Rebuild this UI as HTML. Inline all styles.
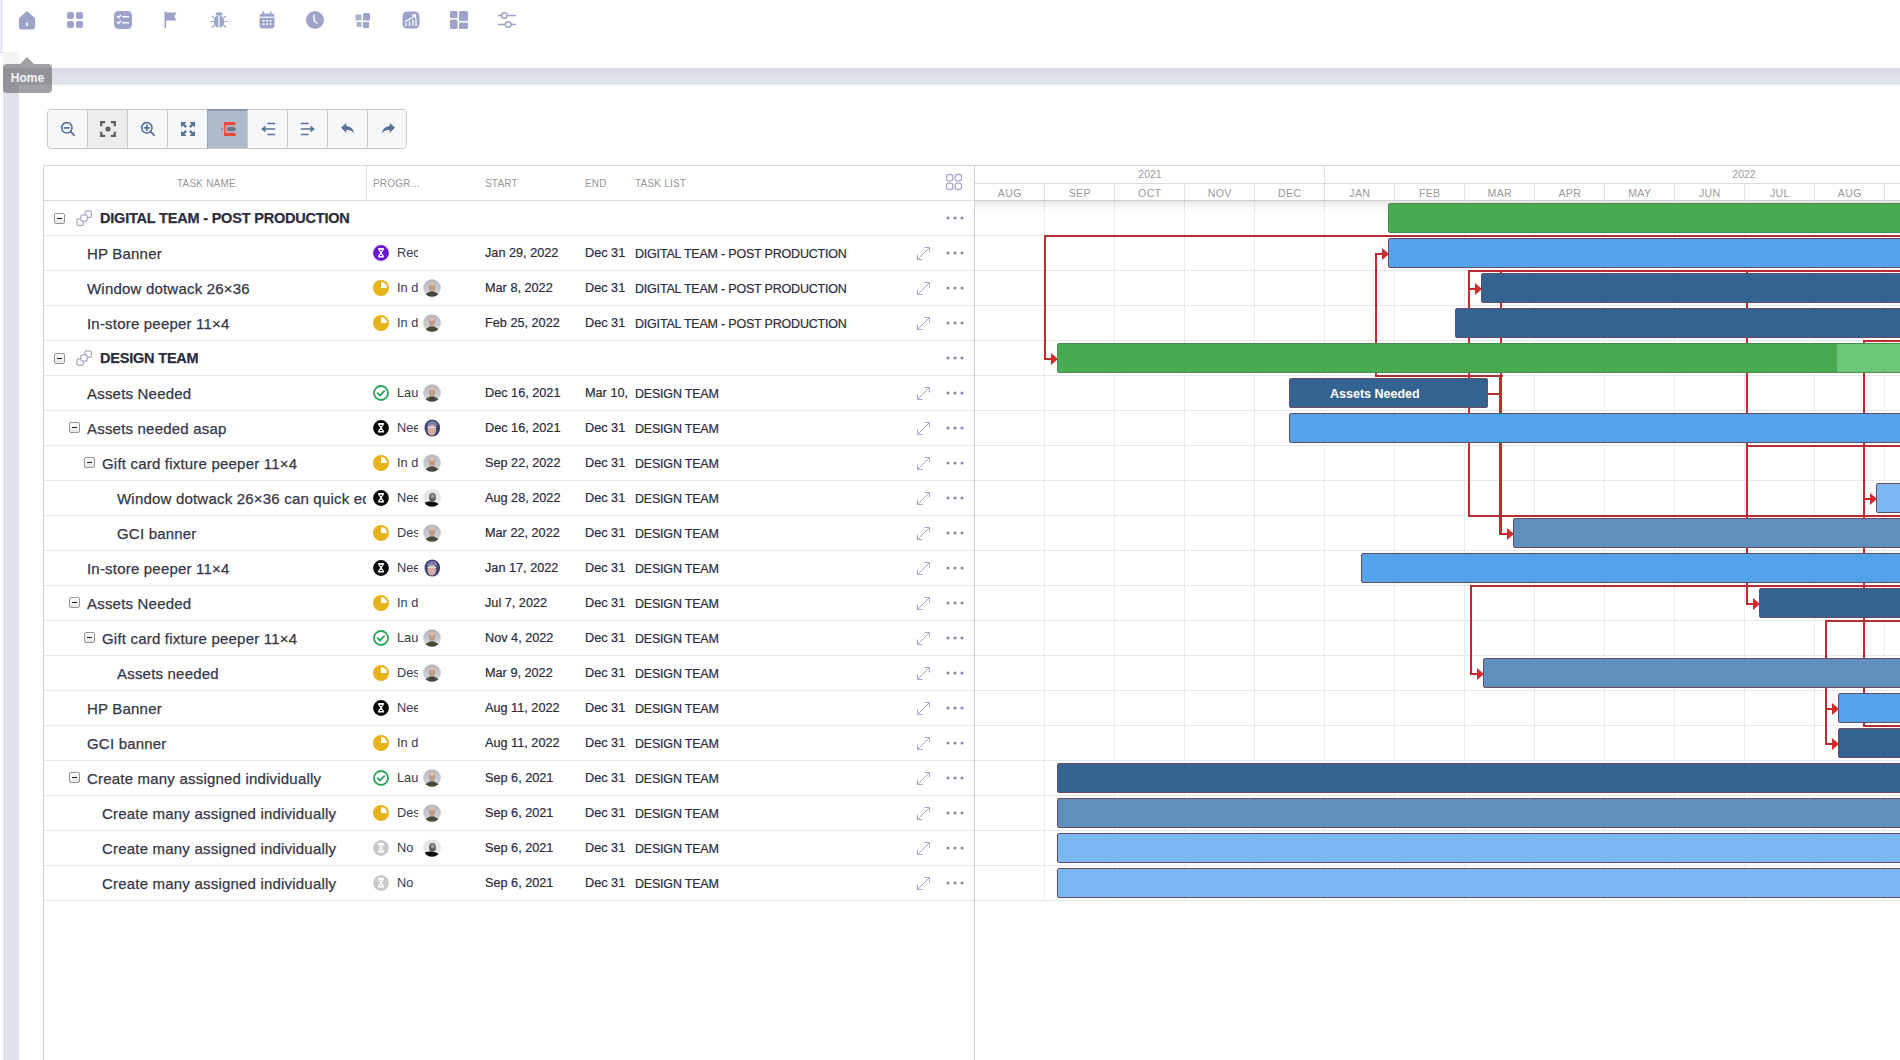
<!DOCTYPE html><html><head><meta charset="utf-8"><style>
*{box-sizing:border-box}
html,body{margin:0;padding:0}
body{width:1900px;height:1060px;overflow:hidden;position:relative;background:#fff;font-family:"Liberation Sans",sans-serif;color:#2b2b3b}
.a{position:absolute}
.ico{position:absolute;top:10px;width:20px;height:20px}
.cb{position:absolute;width:11px;height:11px;border:1px solid #949494;border-radius:2px;background:linear-gradient(#fff,#e6e6e6)}
.cb:after{content:"";position:absolute;left:2px;top:4px;width:5px;height:1.4px;background:#1a1a1a}
.row{position:absolute;left:44px;width:930px;height:35px;border-bottom:1px solid #e9e9ee}
.nm{position:absolute;top:0;line-height:35px;font-size:15px;letter-spacing:.2px;-webkit-text-stroke:.25px #383848;white-space:nowrap;overflow:hidden;color:#363646}
.grp{font-weight:bold;font-size:14.5px;letter-spacing:-.2px;top:0;color:#2b2b3b}
.st{position:absolute;left:329px;top:9px;width:16px;height:16px}
.stx{position:absolute;left:353px;width:21px;top:-1px;line-height:35px;font-size:12.8px;overflow:hidden;white-space:nowrap;color:#3a3a4a}
.av{position:absolute;left:379px;top:8px;width:18px;height:18px}
.dt{position:absolute;top:0;line-height:35px;font-size:12.7px;-webkit-text-stroke:.2px #2b2b3b;white-space:nowrap;color:#2b2b3b}
.tl{position:absolute;left:591px;top:0;line-height:36px;font-size:12.5px;letter-spacing:-.2px;-webkit-text-stroke:.2px #2b2b3b;white-space:nowrap;color:#2b2b3b}
.ex{position:absolute;left:872px;top:10px;width:15px;height:15px}
.dots{position:absolute;left:902px;top:15px;width:18px;height:4px}
.hd{position:absolute;font-size:10px;color:#969696;top:0;line-height:36px;letter-spacing:.2px}
.bar{position:absolute;height:30px;border:1px solid #6d4a63;border-radius:2px}
.ml{position:absolute;width:70px;top:184px;height:17px;line-height:18px;padding-left:1.5px;text-align:center;font-size:10.6px;letter-spacing:.3px;color:#9a9a9a}
</style></head><body>
<svg width="0" height="0" style="position:absolute"><defs><clipPath id="acl"><circle cx="9" cy="9" r="8.8"/></clipPath><linearGradient id="mbg" x1="0" y1="0" x2="0" y2="1"><stop offset="0" stop-color="#b3b7be"/><stop offset="1" stop-color="#d6d8dc"/></linearGradient></defs></svg>

<div class="a" style="left:0;top:0;width:3px;height:52px;background:#e8ebf7"></div>
<div class="a" style="left:0;top:52px;width:3px;height:1px;background:#dcdde3"></div>
<div class="a" style="left:3px;top:52px;width:16px;height:16px;background:#f3f4f5"></div>
<div class="a" style="left:3px;top:68px;width:16px;height:992px;background:#dfe2e8"></div>
<div class="a" style="left:3px;top:68px;width:1897px;height:17px;background:linear-gradient(#dadce3,#e3e5ec)"></div>
<div class="a" style="left:19px;top:85px;width:1881px;height:975px;background:#fff"></div>
<svg class="ico" style="left:17px" viewBox="0 0 20 20"><path d="M3 8.6L10 2.6l7 6v7.9a2 2 0 0 1-2 2H5a2 2 0 0 1-2-2z" fill="#9ea4c9" stroke="#9ea4c9" stroke-width="2.2" stroke-linejoin="round"/><rect x="9.15" y="12.6" width="1.7" height="3.4" fill="#fff"/></svg>
<svg class="ico" style="left:65px" viewBox="0 0 20 20"><rect x="2" y="2" width="7" height="7" rx="2" fill="#9ea4c9"/><rect x="11" y="2" width="7" height="7" rx="2" fill="#9ea4c9"/><rect x="2" y="11" width="7" height="7" rx="2" fill="#9ea4c9"/><rect x="11" y="11" width="7" height="7" rx="2" fill="#9ea4c9"/></svg>
<svg class="ico" style="left:113px" viewBox="0 0 20 20"><rect x="1" y="1" width="18" height="18" rx="4.5" fill="#9ea4c9"/><path d="M4.3 6.5l1.2 1.2 2-2.2M4.3 12.3l1.2 1.2 2-2.2M9.8 6.8h5.6M9.8 12.8h5.6" stroke="#fff" stroke-width="1.4" fill="none" stroke-linecap="round"/></svg>
<svg class="ico" style="left:161px" viewBox="0 0 20 20"><rect x="3.5" y="1.5" width="1.6" height="17" rx=".8" fill="#9ea4c9"/><path d="M5 2.5h10.5l-2.2 4 2.2 4H5z" fill="#9ea4c9"/></svg>
<svg class="ico" style="left:209px" viewBox="0 0 20 20"><path d="M6.5 5.2a3.5 3 0 0 1 7 0z" fill="#9ea4c9"/><ellipse cx="10" cy="11.5" rx="5.2" ry="6.2" fill="#9ea4c9"/><rect x="9.4" y="6" width="1.2" height="11.5" fill="#fff"/><path d="M1.5 11.5h3M15.5 11.5h3M3 6l2.5 2M17 6l-2.5 2M3 17.5l2.5-2.5M17 17.5l-2.5-2.5M7.5 2.5l1 1.5M12.5 2.5l-1 1.5" stroke="#9ea4c9" stroke-width="1.2"/></svg>
<svg class="ico" style="left:257px" viewBox="0 0 20 20"><rect x="2.5" y="3.5" width="15" height="15" rx="3" fill="#9ea4c9"/><rect x="5.5" y="1" width="1.4" height="4" rx=".7" fill="#9ea4c9"/><rect x="13.1" y="1" width="1.4" height="4" rx=".7" fill="#9ea4c9"/><path d="M2.5 7.2h15" stroke="#fff" stroke-width="1.1"/><g fill="#fff"><rect x="5.5" y="10" width="2" height="1.6"/><rect x="9" y="10" width="2" height="1.6"/><rect x="12.5" y="10" width="2" height="1.6"/><rect x="5.5" y="13.3" width="2" height="1.6"/><rect x="9" y="13.3" width="2" height="1.6"/><rect x="12.5" y="13.3" width="2" height="1.6"/></g></svg>
<svg class="ico" style="left:305px" viewBox="0 0 20 20"><circle cx="10" cy="10" r="9" fill="#9ea4c9"/><path d="M9 5v5.5l3 2.5" stroke="#fff" stroke-width="1.4" fill="none" stroke-linecap="round"/></svg>
<svg class="ico" style="left:353px" viewBox="0 0 20 20"><rect x="2.5" y="4.5" width="6" height="6" rx="1" fill="#9ea4c9" opacity=".85"/><rect x="10" y="3" width="7" height="7.5" rx="1.2" fill="#9ea4c9"/><rect x="3.5" y="12" width="5" height="5" rx="1" fill="#9ea4c9" opacity=".85"/><rect x="10" y="12" width="6" height="6" rx="1" fill="#9ea4c9"/></svg>
<svg class="ico" style="left:401px" viewBox="0 0 20 20"><rect x="1.5" y="1.5" width="17" height="17" rx="4.5" fill="#9ea4c9"/><path d="M4.5 11.5l9.5-5.5M11.5 5h3v3M5 15.5v-2M8.5 15.5v-3.5M12 15.5v-5M15 15.5v-6" stroke="#fff" stroke-width="1.3" fill="none" stroke-linecap="round"/></svg>
<svg class="ico" style="left:449px" viewBox="0 0 20 20"><rect x="1" y="1" width="7.5" height="7" rx="1.5" fill="#9ea4c9"/><rect x="10" y="1" width="9" height="10" rx="1.5" fill="#9ea4c9"/><rect x="1" y="9.5" width="7.5" height="9.5" rx="1.5" fill="#9ea4c9"/><rect x="10" y="12.5" width="9" height="6.5" rx="1.5" fill="#9ea4c9"/></svg>
<svg class="ico" style="left:497px" viewBox="0 0 20 20"><path d="M1 5.5h3.5M10 5.5h9M1 14.5h7.5M14 14.5h5" stroke="#9ea4c9" stroke-width="1.5"/><circle cx="7.3" cy="5.5" r="2.8" fill="none" stroke="#9ea4c9" stroke-width="1.5"/><circle cx="11.3" cy="14.5" r="2.8" fill="none" stroke="#9ea4c9" stroke-width="1.5"/></svg>
<div class="a" style="left:3px;top:64px;width:49px;height:29px;background:rgba(82,84,90,.55);border-radius:4px;color:#f4f4f4;font-weight:bold;font-size:12px;line-height:29px;text-align:center">Home</div>
<div class="a" style="left:20px;top:57px;width:0;height:0;border-left:7px solid transparent;border-right:7px solid transparent;border-bottom:7px solid rgba(82,84,90,.55)"></div>
<div class="a" style="left:47px;top:109px;width:360px;height:40px;border:1px solid #c9cacd;border-radius:4px;background:#f6f7f9;overflow:hidden">
<div class="a" style="left:0px;top:0;width:40px;height:38px;background:#f6f7f9;;display:flex;align-items:center;justify-content:center"><svg width="16" height="16" viewBox="0 0 16 16"><circle cx="6.8" cy="6.8" r="5.2" fill="none" stroke="#5a7295" stroke-width="1.6"/><path d="M4.4 6.8h4.8M10.6 10.6l3.5 3.5" stroke="#5a7295" stroke-width="1.8" stroke-linecap="round"/></svg></div>
<div class="a" style="left:39px;top:0;width:40px;height:38px;background:#ececec;border-left:1px solid #c9cacd;;display:flex;align-items:center;justify-content:center"><svg width="16" height="16" viewBox="0 0 16 16"><path d="M1.2 5.2V1.2H5.2M10.8 1.2h4v4M14.8 10.8v4h-4M5.2 14.8h-4v-4" fill="none" stroke="#5c5f66" stroke-width="2.2"/><circle cx="8" cy="8" r="2.6" fill="#5c5f66"/></svg></div>
<div class="a" style="left:79px;top:0;width:40px;height:38px;background:#f6f7f9;border-left:1px solid #c9cacd;;display:flex;align-items:center;justify-content:center"><svg width="16" height="16" viewBox="0 0 16 16"><circle cx="6.8" cy="6.8" r="5.2" fill="none" stroke="#5a7295" stroke-width="1.6"/><path d="M4.4 6.8h4.8M6.8 4.4v4.8M10.6 10.6l3.5 3.5" stroke="#5a7295" stroke-width="1.8" stroke-linecap="round"/></svg></div>
<div class="a" style="left:119px;top:0;width:40px;height:38px;background:#f6f7f9;border-left:1px solid #c9cacd;;display:flex;align-items:center;justify-content:center"><svg width="16" height="16" viewBox="0 0 16 16"><g fill="#5a7295"><path d="M1 1h5.5L4.6 2.9 7 5.3 5.3 7 2.9 4.6 1 6.5z"/><path d="M15 1v5.5l-1.9-1.9L10.7 7 9 5.3l2.4-2.4L9.5 1z"/><path d="M1 15V9.5l1.9 1.9L5.3 9 7 10.7l-2.4 2.4L6.5 15z"/><path d="M15 15H9.5l1.9-1.9L9 10.7 10.7 9l2.4 2.4L15 9.5z"/></g></svg></div>
<div class="a" style="left:159px;top:0;width:40px;height:38px;background:#afb9cc;border-left:1px solid #c9cacd;box-shadow:inset 0 1px 0 #8d97a8;border-left-color:#9ca3ae;;display:flex;align-items:center;justify-content:center"><svg width="20" height="16" viewBox="0 0 20 16"><path d="M7.5 2.6H16.2M7.5 13.4H16.2" stroke="#e9493d" stroke-width="3.2" stroke-linecap="round"/><rect x="6" y="1" width="2.3" height="14" rx=".6" fill="#e9493d"/><rect x="7.3" y="4.3" width="1" height="7.4" fill="#f39a94"/><rect x="8.9" y="6.1" width="8.8" height="3.8" rx="1.7" fill="#6e7683"/><rect x="3.4" y="7" width="1.6" height="2" rx=".5" fill="#7d8592"/></svg></div>
<div class="a" style="left:199px;top:0;width:40px;height:38px;background:#f6f7f9;border-left:1px solid #c9cacd;;display:flex;align-items:center;justify-content:center"><svg width="16" height="16" viewBox="0 0 16 16"><path d="M8 2.5h6.5M8 13.5h6.5M4 8h10.5" stroke="#5a7295" stroke-width="1.7" stroke-linecap="round"/><path d="M1.2 8L5.5 4.6v6.8z" fill="#5a7295"/></svg></div>
<div class="a" style="left:239px;top:0;width:40px;height:38px;background:#f6f7f9;border-left:1px solid #c9cacd;;display:flex;align-items:center;justify-content:center"><svg width="16" height="16" viewBox="0 0 16 16"><path d="M1.5 2.5h6.5M1.5 13.5h6.5M1.5 8h10.5" stroke="#5a7295" stroke-width="1.7" stroke-linecap="round"/><path d="M14.8 8L10.5 4.6v6.8z" fill="#5a7295"/></svg></div>
<div class="a" style="left:279px;top:0;width:40px;height:38px;background:#f6f7f9;border-left:1px solid #c9cacd;;display:flex;align-items:center;justify-content:center"><svg width="16" height="16" viewBox="0 0 16 16"><path d="M1 6.5L6.3 2v3c4.5 .3 7.2 3 7.7 7.5-1.5-2.5-4-3.6-7.7-3.5v3z" fill="#5a7295"/></svg></div>
<div class="a" style="left:319px;top:0;width:40px;height:38px;background:#f6f7f9;border-left:1px solid #c9cacd;;display:flex;align-items:center;justify-content:center"><svg width="16" height="16" viewBox="0 0 16 16"><path d="M15 6.5L9.7 2v3C5.2 5.3 2.5 8 2 12.5c1.5-2.5 4-3.6 7.7-3.5v3z" fill="#5a7295"/></svg></div>
</div>
<div class="a" style="left:207px;top:109px;width:41px;height:1px;background:#8d96a6"></div>
<div class="a" style="left:43px;top:165px;width:1857px;height:1px;background:#d9d9e0"></div>
<div class="a" style="left:43px;top:165px;width:1px;height:895px;background:#d4d4dc"></div>
<div class="a" style="left:974px;top:165px;width:1px;height:895px;background:#cfcfd1"></div>
<div class="a" style="left:44px;top:200px;width:930px;height:1px;background:#d9d9de"></div>
<div class="a" style="left:366px;top:166px;width:1px;height:34px;background:#dcdce2"></div>
<div class="hd" style="left:177px;top:166px">TASK NAME</div>
<div class="hd" style="left:373px;top:166px">PROGR...</div>
<div class="hd" style="left:485px;top:166px">START</div>
<div class="hd" style="left:585px;top:166px">END</div>
<div class="hd" style="left:635px;top:166px">TASK LIST</div>
<svg class="a" style="left:945px;top:173px" width="18" height="18" viewBox="0 0 18 18"><g fill="none" stroke="#aaa8cc" stroke-width="1.3"><rect x="1.5" y="1.5" width="6.3" height="6.3" rx="2"/><rect x="10.2" y="1.5" width="6.3" height="6.3" rx="2"/><rect x="1.5" y="10.2" width="6.3" height="6.3" rx="2"/><rect x="10.2" y="10.2" width="6.3" height="6.3" rx="2"/></g></svg>
<div class="a" style="left:975px;top:183px;width:925px;height:1px;background:#dcdcdf"></div>
<div class="a" style="left:975px;top:200px;width:925px;height:1px;background:#d0d0d2"></div>
<div class="a" style="left:1324px;top:166px;width:1px;height:17px;background:#e3e3e6"></div>
<div class="a" style="left:976px;top:166px;width:348px;height:17px;line-height:17px;text-align:center;font-size:10.5px;color:#9a9a9a">2021</div>
<div class="a" style="left:1325px;top:166px;width:838px;height:17px;line-height:17px;text-align:center;font-size:10.5px;color:#9a9a9a">2022</div>
<div class="ml" style="left:974px">AUG</div>
<div class="ml" style="left:1044px">SEP</div>
<div class="a" style="left:1044px;top:184px;width:1px;height:16px;background:#e3e3e6"></div>
<div class="ml" style="left:1114px">OCT</div>
<div class="a" style="left:1114px;top:184px;width:1px;height:16px;background:#e3e3e6"></div>
<div class="ml" style="left:1184px">NOV</div>
<div class="a" style="left:1184px;top:184px;width:1px;height:16px;background:#e3e3e6"></div>
<div class="ml" style="left:1254px">DEC</div>
<div class="a" style="left:1254px;top:184px;width:1px;height:16px;background:#e3e3e6"></div>
<div class="ml" style="left:1324px">JAN</div>
<div class="a" style="left:1324px;top:184px;width:1px;height:16px;background:#e3e3e6"></div>
<div class="ml" style="left:1394px">FEB</div>
<div class="a" style="left:1394px;top:184px;width:1px;height:16px;background:#e3e3e6"></div>
<div class="ml" style="left:1464px">MAR</div>
<div class="a" style="left:1464px;top:184px;width:1px;height:16px;background:#e3e3e6"></div>
<div class="ml" style="left:1534px">APR</div>
<div class="a" style="left:1534px;top:184px;width:1px;height:16px;background:#e3e3e6"></div>
<div class="ml" style="left:1604px">MAY</div>
<div class="a" style="left:1604px;top:184px;width:1px;height:16px;background:#e3e3e6"></div>
<div class="ml" style="left:1674px">JUN</div>
<div class="a" style="left:1674px;top:184px;width:1px;height:16px;background:#e3e3e6"></div>
<div class="ml" style="left:1744px">JUL</div>
<div class="a" style="left:1744px;top:184px;width:1px;height:16px;background:#e3e3e6"></div>
<div class="ml" style="left:1814px">AUG</div>
<div class="a" style="left:1814px;top:184px;width:1px;height:16px;background:#e3e3e6"></div>
<div class="ml" style="left:1884px">SEP</div>
<div class="a" style="left:1884px;top:184px;width:1px;height:16px;background:#e3e3e6"></div>
<div class="a" style="left:1044px;top:201px;width:1px;height:699px;background:#ececef"></div>
<div class="a" style="left:1114px;top:201px;width:1px;height:699px;background:#ececef"></div>
<div class="a" style="left:1184px;top:201px;width:1px;height:699px;background:#ececef"></div>
<div class="a" style="left:1254px;top:201px;width:1px;height:699px;background:#ececef"></div>
<div class="a" style="left:1324px;top:201px;width:1px;height:699px;background:#ececef"></div>
<div class="a" style="left:1394px;top:201px;width:1px;height:699px;background:#ececef"></div>
<div class="a" style="left:1464px;top:201px;width:1px;height:699px;background:#ececef"></div>
<div class="a" style="left:1534px;top:201px;width:1px;height:699px;background:#ececef"></div>
<div class="a" style="left:1604px;top:201px;width:1px;height:699px;background:#ececef"></div>
<div class="a" style="left:1674px;top:201px;width:1px;height:699px;background:#ececef"></div>
<div class="a" style="left:1744px;top:201px;width:1px;height:699px;background:#ececef"></div>
<div class="a" style="left:1814px;top:201px;width:1px;height:699px;background:#ececef"></div>
<div class="a" style="left:1884px;top:201px;width:1px;height:699px;background:#ececef"></div>
<div class="a" style="left:975px;top:235px;width:925px;height:1px;background:#e9e9ec"></div>
<div class="a" style="left:975px;top:270px;width:925px;height:1px;background:#e9e9ec"></div>
<div class="a" style="left:975px;top:305px;width:925px;height:1px;background:#e9e9ec"></div>
<div class="a" style="left:975px;top:340px;width:925px;height:1px;background:#e9e9ec"></div>
<div class="a" style="left:975px;top:375px;width:925px;height:1px;background:#e9e9ec"></div>
<div class="a" style="left:975px;top:410px;width:925px;height:1px;background:#e9e9ec"></div>
<div class="a" style="left:975px;top:445px;width:925px;height:1px;background:#e9e9ec"></div>
<div class="a" style="left:975px;top:480px;width:925px;height:1px;background:#e9e9ec"></div>
<div class="a" style="left:975px;top:515px;width:925px;height:1px;background:#e9e9ec"></div>
<div class="a" style="left:975px;top:550px;width:925px;height:1px;background:#e9e9ec"></div>
<div class="a" style="left:975px;top:585px;width:925px;height:1px;background:#e9e9ec"></div>
<div class="a" style="left:975px;top:620px;width:925px;height:1px;background:#e9e9ec"></div>
<div class="a" style="left:975px;top:655px;width:925px;height:1px;background:#e9e9ec"></div>
<div class="a" style="left:975px;top:690px;width:925px;height:1px;background:#e9e9ec"></div>
<div class="a" style="left:975px;top:725px;width:925px;height:1px;background:#e9e9ec"></div>
<div class="a" style="left:975px;top:760px;width:925px;height:1px;background:#e9e9ec"></div>
<div class="a" style="left:975px;top:795px;width:925px;height:1px;background:#e9e9ec"></div>
<div class="a" style="left:975px;top:830px;width:925px;height:1px;background:#e9e9ec"></div>
<div class="a" style="left:975px;top:865px;width:925px;height:1px;background:#e9e9ec"></div>
<div class="a" style="left:975px;top:900px;width:925px;height:1px;background:#e9e9ec"></div>
<div class="a" style="left:975px;top:201px;width:925px;height:12px;background:linear-gradient(rgba(0,0,0,.1),rgba(0,0,0,.03) 50%,rgba(0,0,0,0))"></div>
<div class="a" style="left:1045px;top:235px;width:856px;height:2px;background:#b52e31"></div>
<div class="a" style="left:1044px;top:235px;width:2px;height:125px;background:#c4292d"></div>
<div class="a" style="left:1375px;top:253px;width:2px;height:124px;background:#c4292d"></div>
<div class="a" style="left:1376px;top:375px;width:127px;height:2px;background:#b52e31"></div>
<div class="a" style="left:1469px;top:270px;width:432px;height:2px;background:#b52e31"></div>
<div class="a" style="left:1468px;top:270px;width:2px;height:247px;background:#c4292d"></div>
<div class="a" style="left:1469px;top:515px;width:432px;height:2px;background:#b52e31"></div>
<div class="a" style="left:1500px;top:270px;width:2px;height:265px;background:#c4292d"></div>
<div class="a" style="left:1499px;top:375px;width:2px;height:160px;background:#c4292d"></div>
<div class="a" style="left:1488px;top:393px;width:14px;height:2px;background:#b52e31"></div>
<div class="a" style="left:1746px;top:270px;width:2px;height:335px;background:#c4292d"></div>
<div class="a" style="left:1747px;top:445px;width:154px;height:2px;background:#b52e31"></div>
<div class="a" style="left:1864px;top:340px;width:37px;height:2px;background:#b52e31"></div>
<div class="a" style="left:1863px;top:340px;width:2px;height:387px;background:#c4292d"></div>
<div class="a" style="left:1864px;top:725px;width:37px;height:2px;background:#b52e31"></div>
<div class="a" style="left:1471px;top:585px;width:430px;height:2px;background:#b52e31"></div>
<div class="a" style="left:1470px;top:585px;width:2px;height:90px;background:#c4292d"></div>
<div class="a" style="left:1826px;top:620px;width:75px;height:2px;background:#b52e31"></div>
<div class="a" style="left:1825px;top:620px;width:2px;height:125px;background:#c4292d"></div>
<div class="a" style="left:1044px;top:358px;width:8px;height:2px;background:#c4292d"></div>
<div class="a" style="left:1051px;top:353px;width:0;height:0;border-top:6px solid transparent;border-bottom:6px solid transparent;border-left:7px solid #d52a2c"></div>
<div class="a" style="left:1375px;top:253px;width:8px;height:2px;background:#c4292d"></div>
<div class="a" style="left:1382px;top:248px;width:0;height:0;border-top:6px solid transparent;border-bottom:6px solid transparent;border-left:7px solid #d52a2c"></div>
<div class="a" style="left:1468px;top:288px;width:8px;height:2px;background:#c4292d"></div>
<div class="a" style="left:1475px;top:283px;width:0;height:0;border-top:6px solid transparent;border-bottom:6px solid transparent;border-left:7px solid #d52a2c"></div>
<div class="a" style="left:1500px;top:533px;width:8px;height:2px;background:#c4292d"></div>
<div class="a" style="left:1507px;top:528px;width:0;height:0;border-top:6px solid transparent;border-bottom:6px solid transparent;border-left:7px solid #d52a2c"></div>
<div class="a" style="left:1746px;top:603px;width:8px;height:2px;background:#c4292d"></div>
<div class="a" style="left:1753px;top:598px;width:0;height:0;border-top:6px solid transparent;border-bottom:6px solid transparent;border-left:7px solid #d52a2c"></div>
<div class="a" style="left:1863px;top:498px;width:8px;height:2px;background:#c4292d"></div>
<div class="a" style="left:1870px;top:493px;width:0;height:0;border-top:6px solid transparent;border-bottom:6px solid transparent;border-left:7px solid #d52a2c"></div>
<div class="a" style="left:1470px;top:673px;width:8px;height:2px;background:#c4292d"></div>
<div class="a" style="left:1477px;top:668px;width:0;height:0;border-top:6px solid transparent;border-bottom:6px solid transparent;border-left:7px solid #d52a2c"></div>
<div class="a" style="left:1825px;top:708px;width:8px;height:2px;background:#c4292d"></div>
<div class="a" style="left:1832px;top:703px;width:0;height:0;border-top:6px solid transparent;border-bottom:6px solid transparent;border-left:7px solid #d52a2c"></div>
<div class="a" style="left:1825px;top:743px;width:8px;height:2px;background:#c4292d"></div>
<div class="a" style="left:1832px;top:738px;width:0;height:0;border-top:6px solid transparent;border-bottom:6px solid transparent;border-left:7px solid #d52a2c"></div>
<div class="bar" style="left:1388px;top:203px;width:522px;background:#48ab52;border-color:#4a8c50"></div>
<div class="bar" style="left:1388px;top:238px;width:522px;background:#52a2ec;border-color:#6b4a66"></div>
<div class="bar" style="left:1481px;top:273px;width:429px;background:#336391;border-color:#6b4a66"></div>
<div class="bar" style="left:1455px;top:308px;width:455px;background:#336391;border-color:#6b4a66"></div>
<div class="bar" style="left:1057px;top:343px;width:853px;background:linear-gradient(90deg,#48ab52 0,#48ab52 779px,#6cc878 779px);border-color:#4a8c50"></div>
<div class="bar" style="left:1289px;top:378px;width:199px;background:#336391;border-color:#6b4a66"><span style="position:absolute;left:40px;top:1px;line-height:28px;color:#fff;font-weight:bold;font-size:12.5px">Assets Needed</span></div>
<div class="bar" style="left:1289px;top:413px;width:621px;background:#52a2ec;border-color:#6b4a66"></div>
<div class="bar" style="left:1876px;top:483px;width:34px;background:#7bb8f3;border-color:#6b4a66"></div>
<div class="bar" style="left:1513px;top:518px;width:397px;background:#5f8fbd;border-color:#6b4a66"></div>
<div class="bar" style="left:1361px;top:553px;width:549px;background:#52a2ec;border-color:#6b4a66"></div>
<div class="bar" style="left:1759px;top:588px;width:151px;background:#336391;border-color:#6b4a66"></div>
<div class="bar" style="left:1483px;top:658px;width:427px;background:#5f8fbd;border-color:#6b4a66"></div>
<div class="bar" style="left:1838px;top:693px;width:72px;background:#52a2ec;border-color:#6b4a66"></div>
<div class="bar" style="left:1838px;top:728px;width:72px;background:#336391;border-color:#6b4a66"></div>
<div class="bar" style="left:1057px;top:763px;width:853px;background:#336391;border-color:#6b4a66"></div>
<div class="bar" style="left:1057px;top:798px;width:853px;background:#5f8fbd;border-color:#6b4a66"></div>
<div class="bar" style="left:1057px;top:833px;width:853px;background:#7bb8f3;border-color:#6b4a66"></div>
<div class="bar" style="left:1057px;top:868px;width:853px;background:#7bb8f3;border-color:#6b4a66"></div>
<div class="row" style="top:201px"><span class="cb" style="left:10px;top:12px"></span><svg class="a" style="left:32px;top:9px" width="17" height="17" viewBox="0 0 17 17"><g fill="#fff" stroke="#a8a6c2" stroke-width="1.2"><rect x="8.9" y="0.9" width="6.4" height="6.4" rx="1.6"/><rect x="0.9" y="8.9" width="6.4" height="6.4" rx="1.6"/><rect x="4.8" y="4.8" width="6.4" height="6.4" rx="1.6"/></g></svg><div class="nm grp" style="left:56px">DIGITAL TEAM - POST PRODUCTION</div><svg class="dots" viewBox="0 0 18 4"><circle cx="2" cy="2" r="1.6" fill="#8d8ca8"/><circle cx="9" cy="2" r="1.6" fill="#8d8ca8"/><circle cx="16" cy="2" r="1.6" fill="#8d8ca8"/></svg></div>
<div class="row" style="top:236px"><div class="nm" style="left:43px;width:279px">HP Banner</div><div class="st"><svg width="16" height="16" viewBox="0 0 16 16"><circle cx="8" cy="8" r="7.9" fill="#6a19cf"/><path d="M5 3.5Q5 3.1 5.4 3.1H10.6Q11 3.1 11 3.5C11 5.6 8.8 6.6 8.8 7.8C8.8 9 11 9.9 11 12Q11 12.4 10.6 12.4H5.4Q5 12.4 5 12C5 9.9 7.2 9 7.2 7.8C7.2 6.6 5 5.6 5 3.5z" fill="#fff"/><ellipse cx="8" cy="5.3" rx="1.3" ry=".6" fill="#6a19cf"/><ellipse cx="8" cy="10.4" rx="1.3" ry=".6" fill="#6a19cf"/></svg></div><div class="stx">Rec</div><div class="dt" style="left:441px">Jan 29, 2022</div><div class="dt" style="left:541px;width:44px;overflow:hidden">Dec 31</div><div class="tl">DIGITAL TEAM - POST PRODUCTION</div><svg class="ex" viewBox="0 0 15 15"><path d="M1.5 13.5L13.5 1.5M8.5 1.5h5v5M1.5 8.5v5h5" fill="none" stroke="#aaa6cf" stroke-width="1"/></svg><svg class="dots" viewBox="0 0 18 4"><circle cx="2" cy="2" r="1.6" fill="#8d8ca8"/><circle cx="9" cy="2" r="1.6" fill="#8d8ca8"/><circle cx="16" cy="2" r="1.6" fill="#8d8ca8"/></svg></div>
<div class="row" style="top:271px"><div class="nm" style="left:43px;width:279px">Window dotwack 26×36</div><div class="st"><svg width="16" height="16" viewBox="0 0 16 16"><circle cx="8" cy="8" r="8" fill="#e6b31a"/><path d="M8 1.9A6.1 6.1 0 0 1 14.1 8H8z" fill="#fff"/></svg></div><div class="stx">In d</div><div class="av"><svg width="18" height="18" viewBox="0 0 18 18"><g clip-path="url(#acl)"><rect width="18" height="18" fill="url(#mbg)"/><ellipse cx="9" cy="7.6" rx="3.1" ry="4.3" fill="#c29a88"/><ellipse cx="9" cy="5" rx="2.6" ry="1.8" fill="#dcc0b0"/><path d="M7 11.5c.6 1.2 3.4 1.2 4 0l.3 1.2H6.7z" fill="#6a4a3a"/><path d="M1.5 18.5c.6-4.2 3.5-5.8 7.5-5.8s6.9 1.6 7.5 5.8z" fill="#454a3a"/></g></svg></div><div class="dt" style="left:441px">Mar 8, 2022</div><div class="dt" style="left:541px;width:44px;overflow:hidden">Dec 31</div><div class="tl">DIGITAL TEAM - POST PRODUCTION</div><svg class="ex" viewBox="0 0 15 15"><path d="M1.5 13.5L13.5 1.5M8.5 1.5h5v5M1.5 8.5v5h5" fill="none" stroke="#aaa6cf" stroke-width="1"/></svg><svg class="dots" viewBox="0 0 18 4"><circle cx="2" cy="2" r="1.6" fill="#8d8ca8"/><circle cx="9" cy="2" r="1.6" fill="#8d8ca8"/><circle cx="16" cy="2" r="1.6" fill="#8d8ca8"/></svg></div>
<div class="row" style="top:306px"><div class="nm" style="left:43px;width:279px">In-store peeper 11×4</div><div class="st"><svg width="16" height="16" viewBox="0 0 16 16"><circle cx="8" cy="8" r="8" fill="#e6b31a"/><path d="M8 1.9A6.1 6.1 0 0 1 14.1 8H8z" fill="#fff"/></svg></div><div class="stx">In d</div><div class="av"><svg width="18" height="18" viewBox="0 0 18 18"><g clip-path="url(#acl)"><rect width="18" height="18" fill="url(#mbg)"/><ellipse cx="9" cy="7.6" rx="3.1" ry="4.3" fill="#c29a88"/><ellipse cx="9" cy="5" rx="2.6" ry="1.8" fill="#dcc0b0"/><path d="M7 11.5c.6 1.2 3.4 1.2 4 0l.3 1.2H6.7z" fill="#6a4a3a"/><path d="M1.5 18.5c.6-4.2 3.5-5.8 7.5-5.8s6.9 1.6 7.5 5.8z" fill="#454a3a"/></g></svg></div><div class="dt" style="left:441px">Feb 25, 2022</div><div class="dt" style="left:541px;width:44px;overflow:hidden">Dec 31</div><div class="tl">DIGITAL TEAM - POST PRODUCTION</div><svg class="ex" viewBox="0 0 15 15"><path d="M1.5 13.5L13.5 1.5M8.5 1.5h5v5M1.5 8.5v5h5" fill="none" stroke="#aaa6cf" stroke-width="1"/></svg><svg class="dots" viewBox="0 0 18 4"><circle cx="2" cy="2" r="1.6" fill="#8d8ca8"/><circle cx="9" cy="2" r="1.6" fill="#8d8ca8"/><circle cx="16" cy="2" r="1.6" fill="#8d8ca8"/></svg></div>
<div class="row" style="top:341px"><span class="cb" style="left:10px;top:12px"></span><svg class="a" style="left:32px;top:9px" width="17" height="17" viewBox="0 0 17 17"><g fill="#fff" stroke="#a8a6c2" stroke-width="1.2"><rect x="8.9" y="0.9" width="6.4" height="6.4" rx="1.6"/><rect x="0.9" y="8.9" width="6.4" height="6.4" rx="1.6"/><rect x="4.8" y="4.8" width="6.4" height="6.4" rx="1.6"/></g></svg><div class="nm grp" style="left:56px">DESIGN TEAM</div><svg class="dots" viewBox="0 0 18 4"><circle cx="2" cy="2" r="1.6" fill="#8d8ca8"/><circle cx="9" cy="2" r="1.6" fill="#8d8ca8"/><circle cx="16" cy="2" r="1.6" fill="#8d8ca8"/></svg></div>
<div class="row" style="top:376px"><div class="nm" style="left:43px;width:279px">Assets Needed</div><div class="st"><svg width="16" height="16" viewBox="0 0 16 16"><circle cx="8" cy="8" r="7" fill="none" stroke="#2aa55e" stroke-width="1.8"/><path d="M4.6 8.2l2.3 2.3 4.3-4.4" fill="none" stroke="#2aa55e" stroke-width="1.8" stroke-linecap="round" stroke-linejoin="round"/></svg></div><div class="stx">Lau</div><div class="av"><svg width="18" height="18" viewBox="0 0 18 18"><g clip-path="url(#acl)"><rect width="18" height="18" fill="url(#mbg)"/><ellipse cx="9" cy="7.6" rx="3.1" ry="4.3" fill="#c29a88"/><ellipse cx="9" cy="5" rx="2.6" ry="1.8" fill="#dcc0b0"/><path d="M7 11.5c.6 1.2 3.4 1.2 4 0l.3 1.2H6.7z" fill="#6a4a3a"/><path d="M1.5 18.5c.6-4.2 3.5-5.8 7.5-5.8s6.9 1.6 7.5 5.8z" fill="#454a3a"/></g></svg></div><div class="dt" style="left:441px">Dec 16, 2021</div><div class="dt" style="left:541px;width:44px;overflow:hidden">Mar 10, 2022</div><div class="tl">DESIGN TEAM</div><svg class="ex" viewBox="0 0 15 15"><path d="M1.5 13.5L13.5 1.5M8.5 1.5h5v5M1.5 8.5v5h5" fill="none" stroke="#aaa6cf" stroke-width="1"/></svg><svg class="dots" viewBox="0 0 18 4"><circle cx="2" cy="2" r="1.6" fill="#8d8ca8"/><circle cx="9" cy="2" r="1.6" fill="#8d8ca8"/><circle cx="16" cy="2" r="1.6" fill="#8d8ca8"/></svg></div>
<div class="row" style="top:411px"><span class="cb" style="left:25px;top:11px"></span><div class="nm" style="left:43px;width:279px">Assets needed asap</div><div class="st"><svg width="16" height="16" viewBox="0 0 16 16"><circle cx="8" cy="8" r="7.9" fill="#0b0b0b"/><path d="M5 3.5Q5 3.1 5.4 3.1H10.6Q11 3.1 11 3.5C11 5.6 8.8 6.6 8.8 7.8C8.8 9 11 9.9 11 12Q11 12.4 10.6 12.4H5.4Q5 12.4 5 12C5 9.9 7.2 9 7.2 7.8C7.2 6.6 5 5.6 5 3.5z" fill="#fff"/><ellipse cx="8" cy="5.3" rx="1.3" ry=".6" fill="#0b0b0b"/><ellipse cx="8" cy="10.4" rx="1.3" ry=".6" fill="#0b0b0b"/></svg></div><div class="stx">Nee</div><div class="av"><svg width="18" height="18" viewBox="0 0 18 18"><g clip-path="url(#acl)"><rect width="18" height="18" fill="#fff"/><ellipse cx="9.3" cy="9" rx="7.8" ry="8.8" fill="#3e4677"/><path d="M4 7c.5-3.5 3-5 5.5-5S15 3.5 14 7z" fill="#7e7aa6"/><ellipse cx="8.8" cy="11" rx="4.3" ry="5.6" fill="#d2aca0"/><path d="M4.6 8.4h8.6" stroke="#e4e4ea" stroke-width="1.3"/></g></svg></div><div class="dt" style="left:441px">Dec 16, 2021</div><div class="dt" style="left:541px;width:44px;overflow:hidden">Dec 31</div><div class="tl">DESIGN TEAM</div><svg class="ex" viewBox="0 0 15 15"><path d="M1.5 13.5L13.5 1.5M8.5 1.5h5v5M1.5 8.5v5h5" fill="none" stroke="#aaa6cf" stroke-width="1"/></svg><svg class="dots" viewBox="0 0 18 4"><circle cx="2" cy="2" r="1.6" fill="#8d8ca8"/><circle cx="9" cy="2" r="1.6" fill="#8d8ca8"/><circle cx="16" cy="2" r="1.6" fill="#8d8ca8"/></svg></div>
<div class="row" style="top:446px"><span class="cb" style="left:40px;top:11px"></span><div class="nm" style="left:58px;width:264px">Gift card fixture peeper 11×4</div><div class="st"><svg width="16" height="16" viewBox="0 0 16 16"><circle cx="8" cy="8" r="8" fill="#e6b31a"/><path d="M8 1.9A6.1 6.1 0 0 1 14.1 8H8z" fill="#fff"/></svg></div><div class="stx">In d</div><div class="av"><svg width="18" height="18" viewBox="0 0 18 18"><g clip-path="url(#acl)"><rect width="18" height="18" fill="url(#mbg)"/><ellipse cx="9" cy="7.6" rx="3.1" ry="4.3" fill="#c29a88"/><ellipse cx="9" cy="5" rx="2.6" ry="1.8" fill="#dcc0b0"/><path d="M7 11.5c.6 1.2 3.4 1.2 4 0l.3 1.2H6.7z" fill="#6a4a3a"/><path d="M1.5 18.5c.6-4.2 3.5-5.8 7.5-5.8s6.9 1.6 7.5 5.8z" fill="#454a3a"/></g></svg></div><div class="dt" style="left:441px">Sep 22, 2022</div><div class="dt" style="left:541px;width:44px;overflow:hidden">Dec 31</div><div class="tl">DESIGN TEAM</div><svg class="ex" viewBox="0 0 15 15"><path d="M1.5 13.5L13.5 1.5M8.5 1.5h5v5M1.5 8.5v5h5" fill="none" stroke="#aaa6cf" stroke-width="1"/></svg><svg class="dots" viewBox="0 0 18 4"><circle cx="2" cy="2" r="1.6" fill="#8d8ca8"/><circle cx="9" cy="2" r="1.6" fill="#8d8ca8"/><circle cx="16" cy="2" r="1.6" fill="#8d8ca8"/></svg></div>
<div class="row" style="top:481px"><div class="nm" style="left:73px;width:249px">Window dotwack 26×36 can quick edit</div><div class="st"><svg width="16" height="16" viewBox="0 0 16 16"><circle cx="8" cy="8" r="7.9" fill="#0b0b0b"/><path d="M5 3.5Q5 3.1 5.4 3.1H10.6Q11 3.1 11 3.5C11 5.6 8.8 6.6 8.8 7.8C8.8 9 11 9.9 11 12Q11 12.4 10.6 12.4H5.4Q5 12.4 5 12C5 9.9 7.2 9 7.2 7.8C7.2 6.6 5 5.6 5 3.5z" fill="#fff"/><ellipse cx="8" cy="5.3" rx="1.3" ry=".6" fill="#0b0b0b"/><ellipse cx="8" cy="10.4" rx="1.3" ry=".6" fill="#0b0b0b"/></svg></div><div class="stx">Nee</div><div class="av"><svg width="18" height="18" viewBox="0 0 18 18"><g clip-path="url(#acl)"><rect width="18" height="18" fill="#e6e6e6"/><ellipse cx="9.5" cy="8.2" rx="3.4" ry="4.3" fill="#5a5a5a"/><ellipse cx="9.7" cy="7.3" rx="2" ry="2.2" fill="#9a9a9a"/><path d="M0 14.5c2.5-1.5 5-2 8-2 3 0 6 1 9.5 3.5L16 18H0z" fill="#0e0e0e"/></g></svg></div><div class="dt" style="left:441px">Aug 28, 2022</div><div class="dt" style="left:541px;width:44px;overflow:hidden">Dec 31</div><div class="tl">DESIGN TEAM</div><svg class="ex" viewBox="0 0 15 15"><path d="M1.5 13.5L13.5 1.5M8.5 1.5h5v5M1.5 8.5v5h5" fill="none" stroke="#aaa6cf" stroke-width="1"/></svg><svg class="dots" viewBox="0 0 18 4"><circle cx="2" cy="2" r="1.6" fill="#8d8ca8"/><circle cx="9" cy="2" r="1.6" fill="#8d8ca8"/><circle cx="16" cy="2" r="1.6" fill="#8d8ca8"/></svg></div>
<div class="row" style="top:516px"><div class="nm" style="left:73px;width:249px">GCI banner</div><div class="st"><svg width="16" height="16" viewBox="0 0 16 16"><circle cx="8" cy="8" r="8" fill="#e6b31a"/><path d="M8 1.9A6.1 6.1 0 0 1 14.1 8H8z" fill="#fff"/></svg></div><div class="stx">Des</div><div class="av"><svg width="18" height="18" viewBox="0 0 18 18"><g clip-path="url(#acl)"><rect width="18" height="18" fill="url(#mbg)"/><ellipse cx="9" cy="7.6" rx="3.1" ry="4.3" fill="#c29a88"/><ellipse cx="9" cy="5" rx="2.6" ry="1.8" fill="#dcc0b0"/><path d="M7 11.5c.6 1.2 3.4 1.2 4 0l.3 1.2H6.7z" fill="#6a4a3a"/><path d="M1.5 18.5c.6-4.2 3.5-5.8 7.5-5.8s6.9 1.6 7.5 5.8z" fill="#454a3a"/></g></svg></div><div class="dt" style="left:441px">Mar 22, 2022</div><div class="dt" style="left:541px;width:44px;overflow:hidden">Dec 31</div><div class="tl">DESIGN TEAM</div><svg class="ex" viewBox="0 0 15 15"><path d="M1.5 13.5L13.5 1.5M8.5 1.5h5v5M1.5 8.5v5h5" fill="none" stroke="#aaa6cf" stroke-width="1"/></svg><svg class="dots" viewBox="0 0 18 4"><circle cx="2" cy="2" r="1.6" fill="#8d8ca8"/><circle cx="9" cy="2" r="1.6" fill="#8d8ca8"/><circle cx="16" cy="2" r="1.6" fill="#8d8ca8"/></svg></div>
<div class="row" style="top:551px"><div class="nm" style="left:43px;width:279px">In-store peeper 11×4</div><div class="st"><svg width="16" height="16" viewBox="0 0 16 16"><circle cx="8" cy="8" r="7.9" fill="#0b0b0b"/><path d="M5 3.5Q5 3.1 5.4 3.1H10.6Q11 3.1 11 3.5C11 5.6 8.8 6.6 8.8 7.8C8.8 9 11 9.9 11 12Q11 12.4 10.6 12.4H5.4Q5 12.4 5 12C5 9.9 7.2 9 7.2 7.8C7.2 6.6 5 5.6 5 3.5z" fill="#fff"/><ellipse cx="8" cy="5.3" rx="1.3" ry=".6" fill="#0b0b0b"/><ellipse cx="8" cy="10.4" rx="1.3" ry=".6" fill="#0b0b0b"/></svg></div><div class="stx">Nee</div><div class="av"><svg width="18" height="18" viewBox="0 0 18 18"><g clip-path="url(#acl)"><rect width="18" height="18" fill="#fff"/><ellipse cx="9.3" cy="9" rx="7.8" ry="8.8" fill="#3e4677"/><path d="M4 7c.5-3.5 3-5 5.5-5S15 3.5 14 7z" fill="#7e7aa6"/><ellipse cx="8.8" cy="11" rx="4.3" ry="5.6" fill="#d2aca0"/><path d="M4.6 8.4h8.6" stroke="#e4e4ea" stroke-width="1.3"/></g></svg></div><div class="dt" style="left:441px">Jan 17, 2022</div><div class="dt" style="left:541px;width:44px;overflow:hidden">Dec 31</div><div class="tl">DESIGN TEAM</div><svg class="ex" viewBox="0 0 15 15"><path d="M1.5 13.5L13.5 1.5M8.5 1.5h5v5M1.5 8.5v5h5" fill="none" stroke="#aaa6cf" stroke-width="1"/></svg><svg class="dots" viewBox="0 0 18 4"><circle cx="2" cy="2" r="1.6" fill="#8d8ca8"/><circle cx="9" cy="2" r="1.6" fill="#8d8ca8"/><circle cx="16" cy="2" r="1.6" fill="#8d8ca8"/></svg></div>
<div class="row" style="top:586px"><span class="cb" style="left:25px;top:11px"></span><div class="nm" style="left:43px;width:279px">Assets Needed</div><div class="st"><svg width="16" height="16" viewBox="0 0 16 16"><circle cx="8" cy="8" r="8" fill="#e6b31a"/><path d="M8 1.9A6.1 6.1 0 0 1 14.1 8H8z" fill="#fff"/></svg></div><div class="stx">In d</div><div class="dt" style="left:441px">Jul 7, 2022</div><div class="dt" style="left:541px;width:44px;overflow:hidden">Dec 31</div><div class="tl">DESIGN TEAM</div><svg class="ex" viewBox="0 0 15 15"><path d="M1.5 13.5L13.5 1.5M8.5 1.5h5v5M1.5 8.5v5h5" fill="none" stroke="#aaa6cf" stroke-width="1"/></svg><svg class="dots" viewBox="0 0 18 4"><circle cx="2" cy="2" r="1.6" fill="#8d8ca8"/><circle cx="9" cy="2" r="1.6" fill="#8d8ca8"/><circle cx="16" cy="2" r="1.6" fill="#8d8ca8"/></svg></div>
<div class="row" style="top:621px"><span class="cb" style="left:40px;top:11px"></span><div class="nm" style="left:58px;width:264px">Gift card fixture peeper 11×4</div><div class="st"><svg width="16" height="16" viewBox="0 0 16 16"><circle cx="8" cy="8" r="7" fill="none" stroke="#2aa55e" stroke-width="1.8"/><path d="M4.6 8.2l2.3 2.3 4.3-4.4" fill="none" stroke="#2aa55e" stroke-width="1.8" stroke-linecap="round" stroke-linejoin="round"/></svg></div><div class="stx">Lau</div><div class="av"><svg width="18" height="18" viewBox="0 0 18 18"><g clip-path="url(#acl)"><rect width="18" height="18" fill="url(#mbg)"/><ellipse cx="9" cy="7.6" rx="3.1" ry="4.3" fill="#c29a88"/><ellipse cx="9" cy="5" rx="2.6" ry="1.8" fill="#dcc0b0"/><path d="M7 11.5c.6 1.2 3.4 1.2 4 0l.3 1.2H6.7z" fill="#6a4a3a"/><path d="M1.5 18.5c.6-4.2 3.5-5.8 7.5-5.8s6.9 1.6 7.5 5.8z" fill="#454a3a"/></g></svg></div><div class="dt" style="left:441px">Nov 4, 2022</div><div class="dt" style="left:541px;width:44px;overflow:hidden">Dec 31</div><div class="tl">DESIGN TEAM</div><svg class="ex" viewBox="0 0 15 15"><path d="M1.5 13.5L13.5 1.5M8.5 1.5h5v5M1.5 8.5v5h5" fill="none" stroke="#aaa6cf" stroke-width="1"/></svg><svg class="dots" viewBox="0 0 18 4"><circle cx="2" cy="2" r="1.6" fill="#8d8ca8"/><circle cx="9" cy="2" r="1.6" fill="#8d8ca8"/><circle cx="16" cy="2" r="1.6" fill="#8d8ca8"/></svg></div>
<div class="row" style="top:656px"><div class="nm" style="left:73px;width:249px">Assets needed</div><div class="st"><svg width="16" height="16" viewBox="0 0 16 16"><circle cx="8" cy="8" r="8" fill="#e6b31a"/><path d="M8 1.9A6.1 6.1 0 0 1 14.1 8H8z" fill="#fff"/></svg></div><div class="stx">Des</div><div class="av"><svg width="18" height="18" viewBox="0 0 18 18"><g clip-path="url(#acl)"><rect width="18" height="18" fill="url(#mbg)"/><ellipse cx="9" cy="7.6" rx="3.1" ry="4.3" fill="#c29a88"/><ellipse cx="9" cy="5" rx="2.6" ry="1.8" fill="#dcc0b0"/><path d="M7 11.5c.6 1.2 3.4 1.2 4 0l.3 1.2H6.7z" fill="#6a4a3a"/><path d="M1.5 18.5c.6-4.2 3.5-5.8 7.5-5.8s6.9 1.6 7.5 5.8z" fill="#454a3a"/></g></svg></div><div class="dt" style="left:441px">Mar 9, 2022</div><div class="dt" style="left:541px;width:44px;overflow:hidden">Dec 31</div><div class="tl">DESIGN TEAM</div><svg class="ex" viewBox="0 0 15 15"><path d="M1.5 13.5L13.5 1.5M8.5 1.5h5v5M1.5 8.5v5h5" fill="none" stroke="#aaa6cf" stroke-width="1"/></svg><svg class="dots" viewBox="0 0 18 4"><circle cx="2" cy="2" r="1.6" fill="#8d8ca8"/><circle cx="9" cy="2" r="1.6" fill="#8d8ca8"/><circle cx="16" cy="2" r="1.6" fill="#8d8ca8"/></svg></div>
<div class="row" style="top:691px"><div class="nm" style="left:43px;width:279px">HP Banner</div><div class="st"><svg width="16" height="16" viewBox="0 0 16 16"><circle cx="8" cy="8" r="7.9" fill="#0b0b0b"/><path d="M5 3.5Q5 3.1 5.4 3.1H10.6Q11 3.1 11 3.5C11 5.6 8.8 6.6 8.8 7.8C8.8 9 11 9.9 11 12Q11 12.4 10.6 12.4H5.4Q5 12.4 5 12C5 9.9 7.2 9 7.2 7.8C7.2 6.6 5 5.6 5 3.5z" fill="#fff"/><ellipse cx="8" cy="5.3" rx="1.3" ry=".6" fill="#0b0b0b"/><ellipse cx="8" cy="10.4" rx="1.3" ry=".6" fill="#0b0b0b"/></svg></div><div class="stx">Nee</div><div class="dt" style="left:441px">Aug 11, 2022</div><div class="dt" style="left:541px;width:44px;overflow:hidden">Dec 31</div><div class="tl">DESIGN TEAM</div><svg class="ex" viewBox="0 0 15 15"><path d="M1.5 13.5L13.5 1.5M8.5 1.5h5v5M1.5 8.5v5h5" fill="none" stroke="#aaa6cf" stroke-width="1"/></svg><svg class="dots" viewBox="0 0 18 4"><circle cx="2" cy="2" r="1.6" fill="#8d8ca8"/><circle cx="9" cy="2" r="1.6" fill="#8d8ca8"/><circle cx="16" cy="2" r="1.6" fill="#8d8ca8"/></svg></div>
<div class="row" style="top:726px"><div class="nm" style="left:43px;width:279px">GCI banner</div><div class="st"><svg width="16" height="16" viewBox="0 0 16 16"><circle cx="8" cy="8" r="8" fill="#e6b31a"/><path d="M8 1.9A6.1 6.1 0 0 1 14.1 8H8z" fill="#fff"/></svg></div><div class="stx">In d</div><div class="dt" style="left:441px">Aug 11, 2022</div><div class="dt" style="left:541px;width:44px;overflow:hidden">Dec 31</div><div class="tl">DESIGN TEAM</div><svg class="ex" viewBox="0 0 15 15"><path d="M1.5 13.5L13.5 1.5M8.5 1.5h5v5M1.5 8.5v5h5" fill="none" stroke="#aaa6cf" stroke-width="1"/></svg><svg class="dots" viewBox="0 0 18 4"><circle cx="2" cy="2" r="1.6" fill="#8d8ca8"/><circle cx="9" cy="2" r="1.6" fill="#8d8ca8"/><circle cx="16" cy="2" r="1.6" fill="#8d8ca8"/></svg></div>
<div class="row" style="top:761px"><span class="cb" style="left:25px;top:11px"></span><div class="nm" style="left:43px;width:279px">Create many assigned individually</div><div class="st"><svg width="16" height="16" viewBox="0 0 16 16"><circle cx="8" cy="8" r="7" fill="none" stroke="#2aa55e" stroke-width="1.8"/><path d="M4.6 8.2l2.3 2.3 4.3-4.4" fill="none" stroke="#2aa55e" stroke-width="1.8" stroke-linecap="round" stroke-linejoin="round"/></svg></div><div class="stx">Lau</div><div class="av"><svg width="18" height="18" viewBox="0 0 18 18"><g clip-path="url(#acl)"><rect width="18" height="18" fill="url(#mbg)"/><ellipse cx="9" cy="7.6" rx="3.1" ry="4.3" fill="#c29a88"/><ellipse cx="9" cy="5" rx="2.6" ry="1.8" fill="#dcc0b0"/><path d="M7 11.5c.6 1.2 3.4 1.2 4 0l.3 1.2H6.7z" fill="#6a4a3a"/><path d="M1.5 18.5c.6-4.2 3.5-5.8 7.5-5.8s6.9 1.6 7.5 5.8z" fill="#454a3a"/></g></svg></div><div class="dt" style="left:441px">Sep 6, 2021</div><div class="dt" style="left:541px;width:44px;overflow:hidden">Dec 31</div><div class="tl">DESIGN TEAM</div><svg class="ex" viewBox="0 0 15 15"><path d="M1.5 13.5L13.5 1.5M8.5 1.5h5v5M1.5 8.5v5h5" fill="none" stroke="#aaa6cf" stroke-width="1"/></svg><svg class="dots" viewBox="0 0 18 4"><circle cx="2" cy="2" r="1.6" fill="#8d8ca8"/><circle cx="9" cy="2" r="1.6" fill="#8d8ca8"/><circle cx="16" cy="2" r="1.6" fill="#8d8ca8"/></svg></div>
<div class="row" style="top:796px"><div class="nm" style="left:58px;width:264px">Create many assigned individually</div><div class="st"><svg width="16" height="16" viewBox="0 0 16 16"><circle cx="8" cy="8" r="8" fill="#e6b31a"/><path d="M8 1.9A6.1 6.1 0 0 1 14.1 8H8z" fill="#fff"/></svg></div><div class="stx">Des</div><div class="av"><svg width="18" height="18" viewBox="0 0 18 18"><g clip-path="url(#acl)"><rect width="18" height="18" fill="url(#mbg)"/><ellipse cx="9" cy="7.6" rx="3.1" ry="4.3" fill="#c29a88"/><ellipse cx="9" cy="5" rx="2.6" ry="1.8" fill="#dcc0b0"/><path d="M7 11.5c.6 1.2 3.4 1.2 4 0l.3 1.2H6.7z" fill="#6a4a3a"/><path d="M1.5 18.5c.6-4.2 3.5-5.8 7.5-5.8s6.9 1.6 7.5 5.8z" fill="#454a3a"/></g></svg></div><div class="dt" style="left:441px">Sep 6, 2021</div><div class="dt" style="left:541px;width:44px;overflow:hidden">Dec 31</div><div class="tl">DESIGN TEAM</div><svg class="ex" viewBox="0 0 15 15"><path d="M1.5 13.5L13.5 1.5M8.5 1.5h5v5M1.5 8.5v5h5" fill="none" stroke="#aaa6cf" stroke-width="1"/></svg><svg class="dots" viewBox="0 0 18 4"><circle cx="2" cy="2" r="1.6" fill="#8d8ca8"/><circle cx="9" cy="2" r="1.6" fill="#8d8ca8"/><circle cx="16" cy="2" r="1.6" fill="#8d8ca8"/></svg></div>
<div class="row" style="top:831px"><div class="nm" style="left:58px;width:264px">Create many assigned individually</div><div class="st"><svg width="16" height="16" viewBox="0 0 16 16"><circle cx="8" cy="8" r="7.9" fill="#c9c9cd"/><path d="M5 3.5Q5 3.1 5.4 3.1H10.6Q11 3.1 11 3.5C11 5.6 8.8 6.6 8.8 7.8C8.8 9 11 9.9 11 12Q11 12.4 10.6 12.4H5.4Q5 12.4 5 12C5 9.9 7.2 9 7.2 7.8C7.2 6.6 5 5.6 5 3.5z" fill="#fff"/><ellipse cx="8" cy="5.3" rx="1.3" ry=".6" fill="#c9c9cd"/><ellipse cx="8" cy="10.4" rx="1.3" ry=".6" fill="#c9c9cd"/></svg></div><div class="stx">No</div><div class="av"><svg width="18" height="18" viewBox="0 0 18 18"><g clip-path="url(#acl)"><rect width="18" height="18" fill="#e6e6e6"/><ellipse cx="9.5" cy="8.2" rx="3.4" ry="4.3" fill="#5a5a5a"/><ellipse cx="9.7" cy="7.3" rx="2" ry="2.2" fill="#9a9a9a"/><path d="M0 14.5c2.5-1.5 5-2 8-2 3 0 6 1 9.5 3.5L16 18H0z" fill="#0e0e0e"/></g></svg></div><div class="dt" style="left:441px">Sep 6, 2021</div><div class="dt" style="left:541px;width:44px;overflow:hidden">Dec 31</div><div class="tl">DESIGN TEAM</div><svg class="ex" viewBox="0 0 15 15"><path d="M1.5 13.5L13.5 1.5M8.5 1.5h5v5M1.5 8.5v5h5" fill="none" stroke="#aaa6cf" stroke-width="1"/></svg><svg class="dots" viewBox="0 0 18 4"><circle cx="2" cy="2" r="1.6" fill="#8d8ca8"/><circle cx="9" cy="2" r="1.6" fill="#8d8ca8"/><circle cx="16" cy="2" r="1.6" fill="#8d8ca8"/></svg></div>
<div class="row" style="top:866px"><div class="nm" style="left:58px;width:264px">Create many assigned individually</div><div class="st"><svg width="16" height="16" viewBox="0 0 16 16"><circle cx="8" cy="8" r="7.9" fill="#c9c9cd"/><path d="M5 3.5Q5 3.1 5.4 3.1H10.6Q11 3.1 11 3.5C11 5.6 8.8 6.6 8.8 7.8C8.8 9 11 9.9 11 12Q11 12.4 10.6 12.4H5.4Q5 12.4 5 12C5 9.9 7.2 9 7.2 7.8C7.2 6.6 5 5.6 5 3.5z" fill="#fff"/><ellipse cx="8" cy="5.3" rx="1.3" ry=".6" fill="#c9c9cd"/><ellipse cx="8" cy="10.4" rx="1.3" ry=".6" fill="#c9c9cd"/></svg></div><div class="stx">No</div><div class="dt" style="left:441px">Sep 6, 2021</div><div class="dt" style="left:541px;width:44px;overflow:hidden">Dec 31</div><div class="tl">DESIGN TEAM</div><svg class="ex" viewBox="0 0 15 15"><path d="M1.5 13.5L13.5 1.5M8.5 1.5h5v5M1.5 8.5v5h5" fill="none" stroke="#aaa6cf" stroke-width="1"/></svg><svg class="dots" viewBox="0 0 18 4"><circle cx="2" cy="2" r="1.6" fill="#8d8ca8"/><circle cx="9" cy="2" r="1.6" fill="#8d8ca8"/><circle cx="16" cy="2" r="1.6" fill="#8d8ca8"/></svg></div>
</body></html>
